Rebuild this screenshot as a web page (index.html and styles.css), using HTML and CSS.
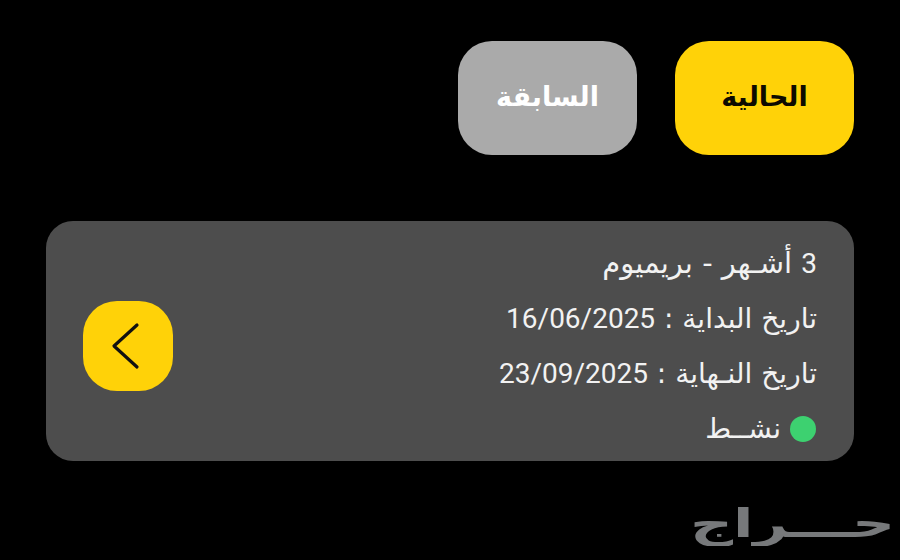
FILE: index.html
```html
<!DOCTYPE html>
<html lang="ar" dir="rtl">
<head>
<meta charset="utf-8">
<title>الاشتراكات</title>
<link rel="stylesheet" href="styles.css">
</head>
<body>
<main class="page">
  <div class="tabs">
    <button class="tab tab-current">الحالية</button>
    <button class="tab tab-past">السابقة</button>
  </div>
  <section class="card">
    <div class="info">
      <p class="line line-title"><span class="num">3</span> أشـهر - بريميوم</p>
      <p class="line">تاريخ البداية : <span class="num">16/06/2025</span></p>
      <p class="line">تاريخ النـهاية : <span class="num">23/09/2025</span></p>
      <p class="line status"><span class="dot"></span>نشــط</p>
    </div>
    <button class="go" aria-label="عرض">
      <svg class="chev" viewBox="0 0 90 90" width="90" height="90"><path d="M54 24 L31 45 L54 66" fill="none" stroke="#111" stroke-width="3.2" stroke-linecap="round" stroke-linejoin="round"/></svg>
    </button>
  </section>
</main>
<div class="mark">حـــراج</div>
</body>
</html>
```
FILE: styles.css
```css
html, body { margin: 0; height: 100%; background: #000; overflow: hidden; }
body { position: relative; font-family: "DejaVu Sans", "Noto Sans", sans-serif; }
.page { padding: 41px 46px 0; display: flex; flex-direction: column; gap: 66px; }
.tabs { display: flex; gap: 38px; }
.tab { width: 179px; height: 114px; border: 0; border-radius: 34px; font-family: inherit; font-size: 27px; font-weight: 700; padding: 0 0 3px; }
.tab-current { background: #ffd208; color: #0d0a00; }
.tab-past { background: #aaaaaa; color: #fff; }
.card { height: 240px; box-sizing: border-box; background: #4d4d4d; border-radius: 27px; padding: 10px 37px 0; display: flex; justify-content: space-between; align-items: center; }
.info { display: flex; flex-direction: column; gap: 18px; color: #f2f2f2; font-size: 28px; line-height: 37px; }
.line { margin: 0; height: 37px; white-space: nowrap; }
.line-title { font-size: 29px; }
.num { font-family: "Roboto", "Liberation Sans", sans-serif; font-size: 28px; }
.status { display: flex; align-items: center; gap: 9px; }
.dot { width: 26px; height: 26px; margin-right: 1px; border-radius: 50%; background: #3dd170; }
.go { width: 90px; height: 90px; border: 0; padding: 0; background: #ffd208; border-radius: 34px; display: flex; align-items: center; justify-content: center; }
.mark { position: absolute; left: 692px; top: 492px; width: 201px; text-align: center; color: #77797b; font-size: 46px; font-weight: 700; line-height: 62px; white-space: nowrap; transform: scale(1.3, 0.85); }
```
